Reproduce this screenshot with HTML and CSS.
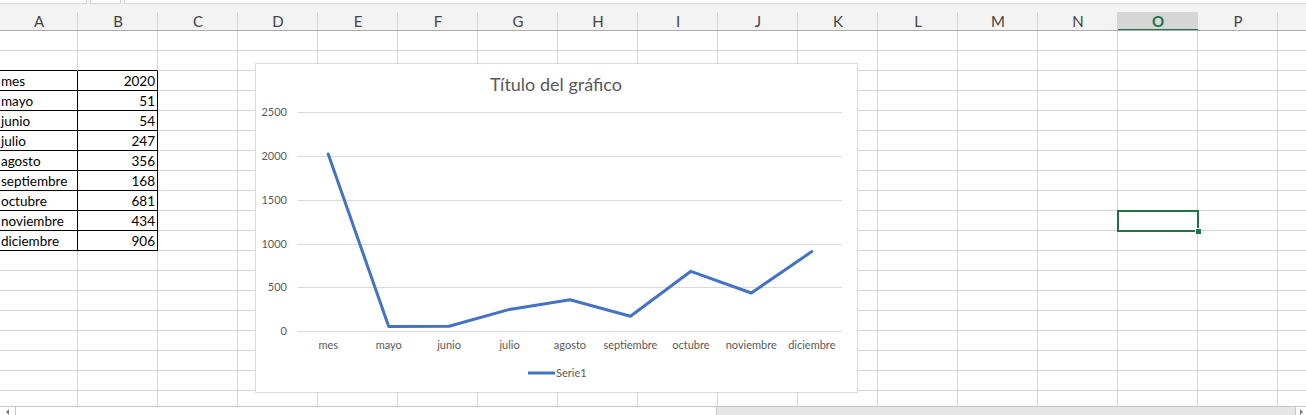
FILE: index.html
```html
<!DOCTYPE html>
<html>
<head>
<meta charset="utf-8">
<title>Libro1 - Excel</title>
<link rel="stylesheet" href="styles.css">
<script>

window.onload = function(){

	var oHead = $('colHead');
	var oRows = $('rows');
	var aCols = 'ABCDEFGHIJKLMNOPQ'.split('');
	var aData = [
		['mes',2020],['mayo',51],['junio',54],['julio',247],['agosto',356],
		['septiembre',168],['octubre',681],['noviembre',434],['diciembre',906]
	];
	var iRows = 19;
	var iSelRow = 9;
	var iSelCol = 14; //columna O
	var iShowCols = 16; //la Q queda fuera de la ventana
	var sHtml = '';

	for(var i=0;i<aCols.length;i++){
		sHtml += '<div class="hCell' + (i==iSelCol ? ' active' : '') + '">' + (i<iShowCols ? aCols[i] : '') + '</div>';
	}
	oHead.innerHTML = sHtml;

	sHtml = '';
	for(var r=0;r<iRows;r++){
		sHtml += '<div class="row">';
		for(var c=0;c<aCols.length;c++){
			var sClass = 'cell';
			var sText = '';
			if(c<2 && r==1){
				sClass += ' bb';
			}
			if(c<2 && r>=2 && r<2+aData.length){
				sClass += ' bb br';
				sText = aData[r-2][c];
				if(c==1) sClass += ' num';
			}
			if(r==iSelRow && c==iSelCol){
				sClass += ' sel';
			}
			sHtml += '<div class="' + sClass + '">' + sText + '</div>';
		}
		sHtml += '</div>';
	}
	oRows.innerHTML = sHtml;

	function $(id){
		return document.getElementById(id);
	}
};

</script>
</head>

<body>
<div id="topBar">
	<div class="box box1"></div>
	<div class="box box2"></div>
	<div class="box box3"></div>
</div>
<div id="colHead"></div>
<div id="sheet">
	<div id="rows"></div>
	<div id="chart">
		<svg width="601" height="328" viewBox="0 0 601 328">
			<text class="title" x="300" y="27">Título del gráfico</text>
			<g class="grid">
				<line x1="42" x2="586" y1="48.5" y2="48.5"/>
				<line x1="42" x2="586" y1="92.5" y2="92.5"/>
				<line x1="42" x2="586" y1="136.5" y2="136.5"/>
				<line x1="42" x2="586" y1="180.5" y2="180.5"/>
				<line x1="42" x2="586" y1="223.5" y2="223.5"/>
				<line x1="42" x2="586" y1="267.5" y2="267.5"/>
			</g>
			<g class="yLabels">
				<text x="31" y="52">2500</text>
				<text x="31" y="96">2000</text>
				<text x="31" y="140">1500</text>
				<text x="31" y="184">1000</text>
				<text x="31" y="227">500</text>
				<text x="31" y="271">0</text>
			</g>
			<polyline class="serie" points="72.2,90 132.7,262.5 193.1,262.3 253.5,245.4 314,235.8 374.4,252.3 434.9,207.3 495.3,229 555.8,187.6"/>
			<g class="xLabels">
				<text x="72.2" y="285">mes</text>
				<text x="132.7" y="285">mayo</text>
				<text x="193.1" y="285">junio</text>
				<text x="253.5" y="285">julio</text>
				<text x="314" y="285">agosto</text>
				<text x="374.4" y="285">septiembre</text>
				<text x="434.9" y="285">octubre</text>
				<text x="495.3" y="285">noviembre</text>
				<text x="555.8" y="285">diciembre</text>
			</g>
			<line class="legendLine" x1="272" x2="299" y1="309" y2="309"/>
			<text class="legendText" x="300" y="313">Serie1</text>
		</svg>
	</div>
</div>
<div id="hScroll">
	<div class="btn btnLeft"><span class="arrL"></span></div>
	<div class="thumb"></div>
	<div class="track"></div>
	<div class="btn btnRight"><span class="arrR"></span></div>
</div>
</body>
</html>
```

FILE: styles.css
```css
/* reset start */
html,body{ overflow:hidden; height:100%;}
body{ margin:0; background:white; color:black; font:15px Lato,"Liberation Sans",sans-serif;}
/* reset end */

/* top start */
#topBar{ display:flex; height:4px; background:#f3f3f3;}
#topBar .box{ height:3px; background:white; border:1px solid #d6d6d6; border-top:none;}
#topBar .box1{ width:86px; border-left:none;}
#topBar .box2{ width:29px; margin-left:3px;}
#topBar .box3{ flex:1; margin-left:3px; border-right:none;}
#colHead{ display:flex; height:26px; background:#f3f3f3; border-bottom:1px solid #ababab; overflow:hidden;}
#colHead .hCell{ flex:none; width:80px; box-sizing:border-box; padding-top:9px; line-height:17px; text-align:center; color:#444; font-size:15px; background:linear-gradient(#d4d4d4,#d4d4d4) no-repeat right bottom / 1px 18px;}
#colHead .hCell:first-child{ width:78px;}
#colHead .active{ color:#217346; font-weight:bold; background:linear-gradient(#d6d6d6,#d6d6d6) no-repeat bottom / 100% 18px; box-shadow:inset 0 -1px 0 #217346, 0 1px 0 #217346;}
/* top end */

/* sheet start */
#sheet{ position:relative; height:375px; overflow:hidden;}
#rows .row{ display:flex; height:20px;}
#rows .cell{ flex:none; width:80px; height:20px; box-sizing:border-box; padding:0 2px 0 1px; border-right:1px solid #d4d4d4; border-bottom:1px solid #d4d4d4; font-size:13.5px; line-height:20px; white-space:nowrap; overflow:hidden;}
#rows .cell:first-child{ width:78px;}
#rows .bb{ border-bottom-color:black;}
#rows .br{ border-right-color:black;}
#rows .num{ text-align:right;}
#rows .sel{ position:relative; outline:2px solid #217346; outline-offset:-1px; overflow:visible; z-index:2;}
#rows .sel:after{ content:""; position:absolute; right:-4px; bottom:-4px; width:5px; height:5px; background:#217346; border-left:1px solid white; border-top:1px solid white;}
/* sheet end */

/* chart start */
#chart{ position:absolute; left:255px; top:32px; width:601px; height:328px; background:white; border:1px solid #d9d9d9; z-index:3;}
#chart svg{ display:block; font-family:Lato,"Liberation Sans",sans-serif;}
#chart .title{ font-size:18px; fill:#595959; text-anchor:middle;}
#chart .grid line{ stroke:#d9d9d9; stroke-width:1;}
#chart .yLabels text{ font-size:11px; fill:#595959; text-anchor:end;}
#chart .xLabels text{ font-size:11px; fill:#595959; text-anchor:middle;}
#chart .serie{ fill:none; stroke:#4472c4; stroke-width:3; stroke-linejoin:round; stroke-linecap:round;}
#chart .legendLine{ stroke:#4472c4; stroke-width:3;}
#chart .legendText{ font-size:11px; fill:#595959;}
/* chart end */

/* scroll start */
#hScroll{ display:flex; height:9px; border-top:1px solid #c6c6c6; background:#e6e6e6;}
#hScroll .btn{ flex:none; display:flex; align-items:center; justify-content:center; background:white;}
#hScroll .btnLeft{ width:15px; border-right:1px solid #c6c6c6;}
#hScroll .btnRight{ width:10px; border-left:1px solid #c6c6c6;}
#hScroll .thumb{ flex:none; width:700px; background:white; border-right:1px solid #c6c6c6;}
#hScroll .track{ flex:1;}
#hScroll .arrL{ width:0; height:0; border-top:3px solid transparent; border-bottom:3px solid transparent; border-right:3px solid #777;}
#hScroll .arrR{ width:0; height:0; border-top:3px solid transparent; border-bottom:3px solid transparent; border-left:3px solid #777;}
/* scroll end */
```
